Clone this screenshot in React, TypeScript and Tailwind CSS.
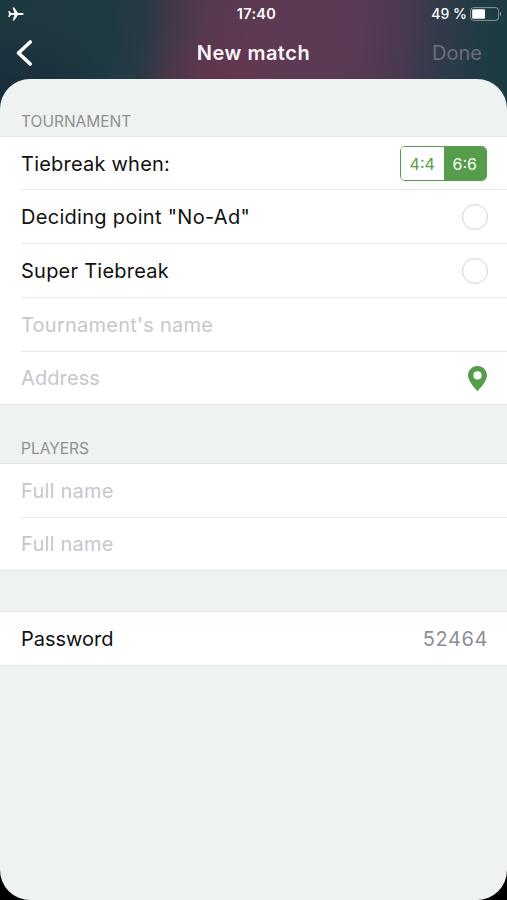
import type { ReactNode } from "react";
import clsx from "clsx";

interface RowProps {
  height: string;
  label: string;
  muted?: boolean;
  last?: boolean;
  tracking?: string;
  children?: ReactNode;
}

const Row = ({ height, label, muted, last, tracking, children }: RowProps) => (
  <div className={clsx("flex bg-white pl-[21px]", height, last && "border-b border-[#e5e8e8]")}>
    <div
      className={clsx(
        "flex flex-1 items-center justify-between pr-5",
        !last && "border-b border-[#e9e9eb]"
      )}
    >
      <span
        className={clsx(
          "text-[20px] leading-6 whitespace-nowrap",
          muted ? "text-[#c7c7cc]" : "text-[#111]",
          tracking
        )}
      >
        {label}
      </span>
      {children}
    </div>
  </div>
);

const SectionTitle = ({ children, className }: { children: ReactNode; className: string }) => (
  <h2
    className={clsx(
      "flex items-end border-b border-[#e3e7e6] pb-1 pl-[21px] text-[15.5px] leading-5 font-normal text-[#8e9192]",
      className
    )}
  >
    {children}
  </h2>
);

const Radio = () => (
  <span className="-mr-px h-[26px] w-[26px] rounded-full border-[1.5px] border-[#d3d3d6]" />
);

const PlaneIcon = () => (
  <svg width="16" height="14" viewBox="0 0 16 14" fill="#fff" className="-ml-[3px]">
    <path d="M15.6 7c0 .6-.6 .9-1.5 .9H10L6.2 13.6H4.6L6.4 7.9H3.2L1.4 10H.2L1 7 .2 4h1.2l1.8 2.1h3.2L4.6 .4h1.6L10 6.1h4.1c.9 0 1.5 .3 1.5 .9z" />
  </svg>
);

const BatteryIcon = () => (
  <svg width="32" height="14" viewBox="0 0 32 14" fill="none">
    <rect x=".6" y=".6" width="28" height="12.8" rx="3" stroke="#fff" strokeOpacity=".45" />
    <rect x="2.2" y="2.2" width="12.8" height="9.6" rx="1.3" fill="#fff" />
    <path d="M30 4.8c1.6.6 1.6 3.8 0 4.4z" fill="#fff" fillOpacity=".5" />
  </svg>
);

const PinIcon = () => (
  <svg width="19" height="25" viewBox="0 0 19 25" fill="#559d4b">
    <path
      fillRule="evenodd"
      d="M9.5 0C4.2 0 0 4.2 0 9.4 0 15.6 9.5 25 9.5 25S19 15.6 19 9.4C19 4.2 14.8 0 9.5 0zm0 5.3a4.1 4.1 0 1 1 0 8.2 4.1 4.1 0 0 1 0-8.2z"
    />
  </svg>
);

export default function App() {
  return (
    <div className="h-[900px] w-full overflow-hidden bg-black font-['Inter','Liberation_Sans',sans-serif]">
      <div className="flex h-full flex-col bg-[radial-gradient(ellipse_70px_60px_at_215px_85px,#70304c80_0%,#70304c00_100%),radial-gradient(ellipse_130px_90px_at_0px_110px,#152438b0_0%,#15243800_100%),linear-gradient(94deg,#1e3840_0px,#1e3a42_110px,#28384300_111px),linear-gradient(94deg,#1e3a42_0px,#1e3a42_110px,#293945_145px,#41394a_172px,#54394f_205px,#5e3a52_250px,#5c3a54_320px,#573a53_365px,#483a51_405px,#343a4b_440px,#213b44_478px,#1c3b42_507px)] bg-[length:100%_120px] bg-no-repeat">
        {/* Status bar */}
        <div className="grid h-[27px] grid-cols-[1fr_auto_1fr] items-center pr-[5px] pl-[11px] text-white">
          <PlaneIcon />
          <span className="text-center text-[14.5px] font-semibold tracking-[0.3px]">17:40</span>
          <div className="flex items-center justify-end gap-[3px]">
            <span className="text-[14px] font-medium whitespace-nowrap">49 %</span>
            <BatteryIcon />
          </div>
        </div>

        {/* Navigation */}
        <div className="grid h-[52px] grid-cols-[1fr_auto_1fr] items-center px-[25px]">
          <svg width="17" height="28" viewBox="0 0 17 28" fill="none" className="-ml-[9px]">
            <path
              d="M14.2 3L2.5 14l11.7 11"
              stroke="#fff"
              strokeWidth="3.6"
              strokeLinecap="round"
              strokeLinejoin="round"
            />
          </svg>
          <h1 className="text-center text-[20px] font-semibold tracking-[0.5px] whitespace-nowrap text-[#fcf4fb]">
            New match
          </h1>
          <span className="text-right text-[20px] text-[#6a6e7b]">Done</span>
        </div>

        {/* Form */}
        <main className="flex-1 overflow-hidden rounded-[30px] bg-[#eef2f1]">
          <SectionTitle className="h-[58px]">TOURNAMENT</SectionTitle>
          <Row height="h-[53px] pt-px" label="Tiebreak when:" tracking="tracking-[0.22px]">
            <div className="flex h-[35px] w-[87px] overflow-hidden rounded-[5px] border-[1.5px] border-[#559d4b] text-[16px]">
              <span className="flex flex-1 items-center justify-center bg-white text-[#559d4b]">4:4</span>
              <span className="flex flex-1 items-center justify-center bg-[#559d4b] text-white">6:6</span>
            </div>
          </Row>
          <Row height="h-[54px]" label={'Deciding point "No-Ad"'} tracking="tracking-[0.3px]">
            <Radio />
          </Row>
          <Row height="h-[54px]" label="Super Tiebreak" tracking="tracking-[0.24px]">
            <Radio />
          </Row>
          <Row height="h-[54px]" label="Tournament's name" tracking="tracking-[0.24px]" muted />
          <Row height="h-[53px]" label="Address" tracking="tracking-[0.1px]" muted last>
            <PinIcon />
          </Row>

          <SectionTitle className="h-[59px]">PLAYERS</SectionTitle>
          <Row height="h-[54px]" label="Full name" tracking="tracking-[0.25px]" muted />
          <Row height="h-[53px]" label="Full name" tracking="tracking-[0.25px]" muted last />

          <div className="h-[41px] border-b border-[#e3e7e6]" />
          <Row height="h-[54px]" label="Password" last>
            <span className="-mr-px text-[20px] leading-6 tracking-[0.6px] text-[#8e8e93]">52464</span>
          </Row>
        </main>
      </div>
    </div>
  );
}
